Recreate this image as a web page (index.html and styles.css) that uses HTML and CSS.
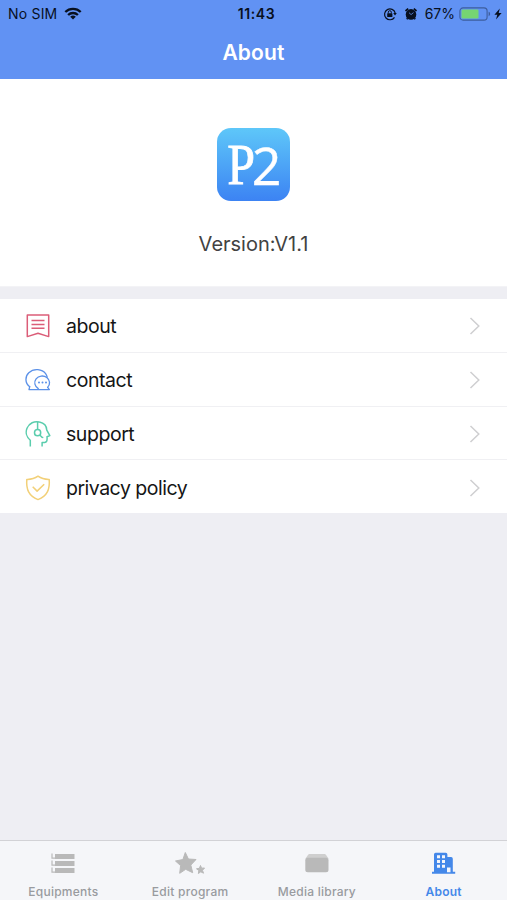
FILE: index.html
```html
<!DOCTYPE html>
<html lang="en">
<head>
<meta charset="utf-8">
<title>About</title>
<link rel="stylesheet" href="styles.css">
</head>
<body>
<div class="app">
  <header class="top">
    <div class="status">
      <div class="status-left">
        <span class="carrier">No SIM</span>
        <svg class="wifi" width="18" height="13" viewBox="0 0 18 13" fill="none" stroke="#08101f" stroke-width="2.3"><path d="M1.3 5a11 11 0 0 1 15.4 0M4.1 8a7 7 0 0 1 9.8 0"/><path d="M9 12.6 6.2 9.8a4 4 0 0 1 5.6 0z" fill="#08101f" stroke="none"/></svg>
      </div>
      <span class="clock">11:43</span>
      <div class="status-right">
        <svg width="14" height="14" viewBox="0 0 14 14" fill="none" stroke="#08101f"><path d="M11.5 10.3A5.4 5.4 0 1 1 12.2 6" stroke-width="1.2"/><path d="M10.2 6h3.6L12 8.6z" fill="#08101f" stroke="none"/><rect x="4.2" y="6.2" width="5.2" height="3.8" rx=".5" fill="#08101f" stroke="none"/><path d="M5.3 6.4V5.2a1.5 1.5 0 0 1 3 0v1.2" stroke-width="1"/></svg>
        <svg class="alarm" width="14" height="14" viewBox="0 0 14 14"><circle cx="7" cy="7.4" r="5.3" fill="#08101f"/><path d="M1.5 4 4.200 1.700M12.500 4 9.800 1.700M3.600 11.200l-.8 1.100M10.400 11.200l.8 1.100" stroke="#08101f" stroke-width="1.700"/><path d="m5 5.700 2.100 1.900 2.400-2" fill="none" stroke="#6192f3" stroke-width=".8"/></svg>
        <span class="percent">67%</span>
        <svg class="battery" width="32" height="14" viewBox="0 0 32 14"><rect x=".9" y=".9" width="27.2" height="12.2" rx="3.2" fill="none" stroke="#3d5d9d" stroke-width="1.1"/><rect x="2.5" y="2.5" width="17" height="9" rx="1.2" fill="#76d572"/><path d="M29.6 4.8c2 .6 2 3.8 0 4.4z" fill="#3d5d9d"/></svg>
        <svg class="bolt" width="8" height="12" viewBox="0 0 8 12"><path d="M5.8.5.4 6.8h2.9L2 11.5l5.6-6.4H4.7z" fill="#08101f"/></svg>
      </div>
    </div>
    <h1 class="title">About</h1>
  </header>
  <section class="hero">
    <div class="logo"><span class="logo-p">P</span><span class="logo-2">2</span></div>
    <p class="version">Version:V1.1</p>
  </section>
  <main class="list">
    <a class="row">
      <svg class="icon" viewBox="0 0 26 28" fill="none" stroke="#db5d78" stroke-width="1.5"><path d="M2.3 3.1h21.4v21.500l-10.700-3.300-10.700 3.300z" stroke-linejoin="round"/><path d="M6.500 8.500h13M6.500 12.400h13M6.500 16.300h13"/></svg>
      <span class="label l-about">about</span>
      <svg class="chevron" viewBox="0 0 12 18"><path d="m1.5 1 8.3 8-8.3 8"/></svg>
    </a>
    <a class="row">
      <svg class="icon" viewBox="0 0 26 28" fill="none" stroke="#5b91e8" stroke-width="1.3" stroke-linejoin="round" stroke-linecap="round"><path d="M4.700 20.700C-.4 17 .1 10.200 3.800 6.700c5-4.900 13.500-3.700 16.800.9.900 1.200 1.400 2.400 1.600 3.600"/><path d="M4.700 20.700 4 23.600h20.400l-1.800-2.200"/><path d="M13.300 22.600a7.400 6.800 0 1 1 9.300-1.200"/><g fill="#5b91e8" stroke="none"><circle cx="14" cy="16.600" r="1"/><circle cx="17.500" cy="16.600" r="1"/><circle cx="21" cy="16.600" r="1"/></g></svg>
      <span class="label l-contact">contact</span>
      <svg class="chevron" viewBox="0 0 12 18"><path d="m1.5 1 8.3 8-8.3 8"/></svg>
    </a>
    <a class="row">
      <svg class="icon" viewBox="0 0 26 28" fill="none" stroke="#5acdad" stroke-width="1.500" stroke-linejoin="round"><path d="M5.300 26.500v-6.200C1.600 17.200.3 12.300 2 8.300 4.100 3.100 9.400.8 14.400 2c4.800 1 7.300 4.400 7.400 8.200l3 5.400-2.800 1.200c.4 4.200-.4 5.600-2.300 5.600h-2.600v4.100"/><path d="M12.600 2v7.600"/><circle cx="12.600" cy="12.700" r="3.100"/><path d="m14.800 15 2.200 2.200 1.300.4"/></svg>
      <span class="label l-support">support</span>
      <svg class="chevron" viewBox="0 0 12 18"><path d="m1.5 1 8.3 8-8.3 8"/></svg>
    </a>
    <a class="row">
      <svg class="icon" viewBox="0 0 26 28" fill="none" stroke="#f2d078" stroke-width="1.500" stroke-linejoin="round"><path d="M13 2.200c3.200 2.300 7 3.300 11.200 3.200C25 15.500 22.300 21.800 13 25.600 3.700 21.800 1 15.500 1.800 5.400 6 5.500 9.800 4.500 13 2.200z"/><path d="m7.700 12.700 4.400 4.400 7.100-6.900"/></svg>
      <span class="label l-privacy">privacy policy</span>
      <svg class="chevron" viewBox="0 0 12 18"><path d="m1.5 1 8.3 8-8.3 8"/></svg>
    </a>
  </main>
  <nav class="tabs">
    <a class="tab">
      <svg viewBox="0 0 32 26" fill="#b9b9b9"><path d="M8 4h19.500v5H8zM8 11h19.500v5H8zM8 18h19.500v5H8z"/><path d="M5 3.500v4.600h3M5 10.500v4.600h3M5 17.500v4.600h3" fill="none" stroke="#b9b9b9" stroke-width="1.200"/></svg>
      <span class="t-equip">Equipments</span>
    </a>
    <a class="tab">
      <svg viewBox="0 0 32 26" fill="#b9b9b9" stroke="#b9b9b9" stroke-linejoin="round"><path d="m11.300 2.500 3.100 6.500 7.600.5-5.200 5.600 1.900 7.600-7-3.400-6 4 .9-7.700L1.500 11l7.400-1.500z"/><path d="m26.500 15.500 1.100 2.700 2.900-.2-2 2.300 1 2.900-2.700-1.400-2.400 1.700.4-3-2.300-1.700 2.900-.5z"/></svg>
      <span class="t-edit">Edit program</span>
    </a>
    <a class="tab">
      <svg viewBox="0 0 32 26"><path d="m4.300 8.800 3-4.300q.4-.5 1-.5h15.400q.6 0 1 .5l3 4.300z" fill="#cfcfcf"/><rect x="4.300" y="7.800" width="23.200" height="14.400" rx="2.500" fill="#b9b9b9"/></svg>
      <span class="t-media">Media library</span>
    </a>
    <a class="tab active">
      <svg viewBox="0 0 32 26"><path d="M6 21.700V4.400q0-1.600 1.600-1.600h10.200q1.600 0 1.600 1.600v2.700h3.700q1.700 0 1.700 1.600v13h2.400v2H4v-2z" fill="#4488e9"/><path d="M9 5.200h3v3H9zM14 5.200h3v3h-3zM9 10h3v3H9zM14 10h3v3h-3zM9 14.800h3v3H9zM14 14.800h3v3h-3zM19 17.500h3.500v4.700H19z" fill="#f5f6fa"/></svg>
      <span class="t-about">About</span>
    </a>
  </nav>
</div>
</body>
</html>
```

FILE: styles.css
```css
* { box-sizing: border-box; }
body { margin: 0; font-family: Inter, "Liberation Sans", sans-serif; }
.app { height: 900px; display: flex; flex-direction: column; background: #eeeef3; overflow: hidden; }
.top { height: 79px; background: #6192f3; flex: none; }
.status { height: 27px; display: grid; grid-template-columns: 1fr auto 1fr; align-items: center; font-size: 14px; color: #08101f; padding: 0 5px 0 8px; }
.status-left, .status-right { display: flex; align-items: center; }
.status-right { justify-content: flex-end; }
.carrier { letter-spacing: .2px; }
.wifi { margin-left: 7px; }
.alarm { margin: 0 7px; }
.clock { font-weight: 600; letter-spacing: .6px; padding-left: 3px; }
.battery { margin-left: 4px; }
.bolt { margin-left: 3px; }
.title { margin: 0; height: 50px; line-height: 51px; text-align: center; color: #fff; font-size: 21px; font-weight: 600; letter-spacing: .15px; }
.hero { height: 208px; flex: none; background: #fff; border-bottom: 1px solid #f3f3f6; padding-top: 49px; }
.logo { width: 73px; height: 73px; margin: 0 auto; border-radius: 14px; background: linear-gradient(#5ec7f9, #3c83f3); color: #fff; display: flex; justify-content: center; align-items: center; line-height: 73px; }
.logo-p { font: 58px/73px "Liberation Serif", serif; -webkit-text-stroke: .8px #fff; transform: scaleX(.86); margin-left: -1px; }
.logo-2 { font: 52px/73px "Open Sans", sans-serif; -webkit-text-stroke: .4px #fff; margin-left: -5px; }
.version { margin: 30px 0 0; text-align: center; font-size: 20px; line-height: 27px; color: #424242; }
.list { margin-top: 12px; flex: none; }
.row { height: 53.75px; display: flex; align-items: center; padding: 2px 26px 0 25px; background: #fff; border-bottom: 1.500px solid #f0f0f3; }
.row:last-child { border-bottom: 0; height: 53px; }
.icon { width: 26px; height: 28px; margin-right: 15px; }
.label { font-size: 19.500px; color: #151515; flex: 1; letter-spacing: -.45px; }
.chevron { width: 12px; height: 18px; fill: none; stroke: #cfcfd1; stroke-width: 1.500; }
.l-privacy { letter-spacing: -.5px; }
.tabs { height: 60px; margin-top: auto; display: grid; grid-template-columns: repeat(4, 1fr); background: #f5f6f9; border-top: 1px solid #d2d2d6; }
.tab { display: flex; flex-direction: column; align-items: center; padding-top: 9px; font-size: 12px; line-height: 16px; font-weight: 500; color: #999b9f; letter-spacing: .25px; }
.tab svg { width: 32px; height: 26px; margin-bottom: 8px; }
.active { color: #4488e9; font-weight: 600; }
```
